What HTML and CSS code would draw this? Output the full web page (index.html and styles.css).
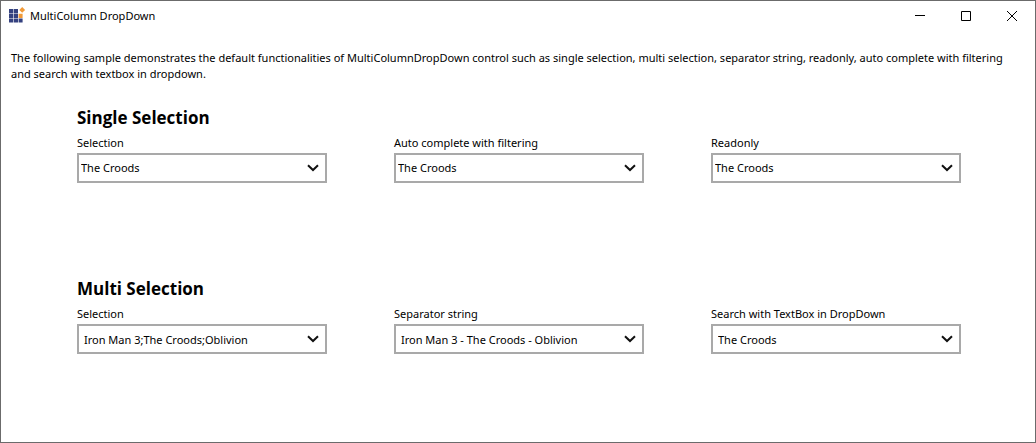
FILE: index.html
```html
<!DOCTYPE html>
<html lang="en">
<head>
<meta charset="utf-8">
<meta name="viewport" content="width=device-width, initial-scale=1">
<title>MultiColumn DropDown</title>
<link rel="stylesheet" href="styles.css">
</head>
<body>
<div class="window">
  <header class="titlebar">
    <svg class="app-icon" viewBox="0 0 16 16" aria-hidden="true">
      <path fill="#34417f" d="M0 1h4.2v4.2H0zM4.8 1H9v4.2H4.8zM0 5.8h4.2V10H0zM4.8 5.8H9V10H4.8zM0 10.6h4.2v3.8H0zM4.8 10.6H9v3.8H4.8zM9.6 10.6h4v3.8h-4z"/>
      <path fill="#f19a38" d="M9.6 5.8h4V10h-4zM13.2-1l2.9 2.9-2.9 2.9-2.9-2.9z"/>
    </svg>
    <h1 class="title">MultiColumn DropDown</h1>
    <div class="controls">
      <button class="control" type="button" aria-label="Minimize"><svg viewBox="0 0 10 10"><path d="M0 4.5h10"/></svg></button>
      <button class="control" type="button" aria-label="Maximize"><svg viewBox="0 0 10 10"><path d="M.5.5h9v9h-9z"/></svg></button>
      <button class="control" type="button" aria-label="Close"><svg viewBox="0 0 10 10"><path d="M0 0l10 10M10 0L0 10"/></svg></button>
    </div>
  </header>
  <main class="content">
    <p class="intro">The following sample demonstrates the default functionalities of MultiColumnDropDown control such as single selection, multi selection, separator string, readonly, auto complete with filtering and search with textbox in dropdown.</p>
    <section class="group">
      <h2 class="heading">Single Selection</h2>
      <div class="fields">
        <div class="field">
          <label class="label" for="single">Selection</label>
          <div class="combo">
            <select class="select" id="single"><option>The Croods</option></select>
            <svg class="chevron" viewBox="0 0 12 8" aria-hidden="true"><path d="M1 1.2l5 4.8 5-4.8"/></svg>
          </div>
        </div>
        <div class="field">
          <label class="label" for="filter">Auto complete with filtering</label>
          <div class="combo">
            <select class="select" id="filter"><option>The Croods</option></select>
            <svg class="chevron" viewBox="0 0 12 8" aria-hidden="true"><path d="M1 1.2l5 4.8 5-4.8"/></svg>
          </div>
        </div>
        <div class="field">
          <label class="label" for="readonly">Readonly</label>
          <div class="combo">
            <select class="select" id="readonly"><option>The Croods</option></select>
            <svg class="chevron" viewBox="0 0 12 8" aria-hidden="true"><path d="M1 1.2l5 4.8 5-4.8"/></svg>
          </div>
        </div>
      </div>
    </section>
    <section class="group">
      <h2 class="heading">Multi Selection</h2>
      <div class="fields">
        <div class="field">
          <label class="label" for="multi">Selection</label>
          <div class="combo">
            <select class="select multi" id="multi"><option>Iron Man 3;The Croods;Oblivion</option></select>
            <svg class="chevron" viewBox="0 0 12 8" aria-hidden="true"><path d="M1 1.2l5 4.8 5-4.8"/></svg>
          </div>
        </div>
        <div class="field">
          <label class="label" for="separator">Separator string</label>
          <div class="combo">
            <select class="select multi" id="separator"><option>Iron Man 3 - The Croods - Oblivion</option></select>
            <svg class="chevron" viewBox="0 0 12 8" aria-hidden="true"><path d="M1 1.2l5 4.8 5-4.8"/></svg>
          </div>
        </div>
        <div class="field">
          <label class="label" for="search">Search with TextBox in DropDown</label>
          <div class="combo">
            <select class="select multi" id="search"><option>The Croods</option></select>
            <svg class="chevron" viewBox="0 0 12 8" aria-hidden="true"><path d="M1 1.2l5 4.8 5-4.8"/></svg>
          </div>
        </div>
      </div>
    </section>
  </main>
</div>
</body>
</html>
```

FILE: styles.css
```css
* {
  box-sizing: border-box;
}

body {
  margin: 0;
  background: #fff;
  color: #000;
  font-family: "Segoe UI", "Noto Sans", "Open Sans", sans-serif;
  font-size: 11px;
  line-height: 16px;
}

.window {
  min-height: 100vh;
  border: 1px solid #6b6b6b;
}

.titlebar {
  display: flex;
  align-items: center;
  height: 30px;
  padding-left: 8px;
}

.app-icon {
  width: 16px;
  height: 16px;
  overflow: visible;
}

.title {
  margin: 0 0 0 5px;
  font-size: 11px;
  font-weight: 400;
}

.controls {
  display: flex;
  align-self: stretch;
  margin-left: auto;
}

.control {
  display: flex;
  align-items: center;
  justify-content: center;
  width: 46px;
  padding: 0;
  border: 0;
  background: none;
}

.control svg {
  width: 10px;
  height: 10px;
  overflow: visible;
  fill: none;
  stroke: #000;
}

.control:hover {
  background: #e5e5e5;
}

.intro {
  margin: 0;
  padding: 19px 16px 24px 10px;
}

.group {
  padding: 0 74px 94px 76px;
}

.group:last-child {
  padding-bottom: 24px;
}

.heading {
  margin: 0 0 5px;
  font-family: "Segoe UI", "Open Sans", "Noto Sans", sans-serif;
  font-size: 17px;
  font-weight: 700;
  line-height: 24px;
}

.fields {
  display: grid;
  grid-template-columns: repeat(3, minmax(0, 1fr));
  gap: 67px;
}

.label {
  display: block;
  margin-bottom: 2px;
}

.combo {
  display: grid;
  align-items: center;
}

.select,
.chevron {
  grid-area: 1 / 1;
}

.select {
  width: 100%;
  height: 30px;
  padding: 0 28px 0 2px;
  border: 2px solid #a9a9a9;
  border-radius: 0;
  appearance: none;
  background: #fff;
  color: #000;
  font: inherit;
}

.multi {
  padding-top: 2px;
  padding-left: 5px;
}

.chevron {
  justify-self: end;
  width: 12px;
  height: 8px;
  margin-right: 8px;
  fill: none;
  stroke: #111;
  stroke-width: 2;
  pointer-events: none;
}
```
